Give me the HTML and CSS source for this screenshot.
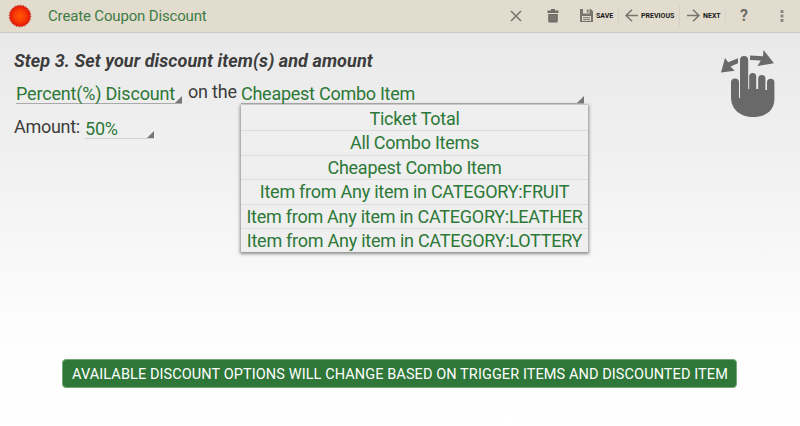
FILE: index.html
```html
<!DOCTYPE html>
<html lang="en">
<head>
<meta charset="utf-8">
<title>Create Coupon Discount</title>
<link rel="stylesheet" href="styles.css">
</head>
<body>
<header class="bar">
  <svg class="logo" viewBox="0 0 24 24">
    <defs><radialGradient id="seal"><stop offset="0" stop-color="#ff5a08"/><stop offset=".55" stop-color="#f93a06"/><stop offset="1" stop-color="#df1708"/></radialGradient></defs>
    <circle cx="12" cy="12" r="10.500" fill="url(#seal)"/>
    <circle cx="12" cy="12" r="10.800" fill="none" stroke="#c91d12" stroke-width="1" stroke-dasharray="1.4 1.4"/>
  </svg>
  <h1 class="title"><span>Create Coupon Discount</span></h1>
  <nav class="actions">
    <button class="action close" aria-label="Close"><svg width="12" height="12" viewBox="0 0 12 12"><path d="M1 1l10 10M11 1L1 11" fill="none" stroke="#77746c" stroke-width="1.5"/></svg></button>
    <button class="action trash" aria-label="Delete"><svg width="12" height="14" viewBox="0 0 12 14"><path d="M4 0h4v1.4h3.5V4H.5V1.4H4zM1.2 5h9.6v7q0 1.5-1.5 1.5H2.7Q1.2 13.500 1.200 12z" fill="#706d66"/><path d="M3.900 6.500v5M6 6.500v5M8.100 6.500v5" stroke="#918e86" stroke-width=".7"/></svg></button>
    <button class="action save"><svg width="13" height="13" viewBox="0 0 13 13"><path d="M0 0h10.800L13 2.200V13H0z" fill="#77746c"/><path d="M3 0h6.500v4.500H3zM2 7h9v5H2z" fill="#e2dccf"/><path d="M6.800 .5h1.700v3H6.800z" fill="#77746c"/><path d="M3 8.700h7M3 10.700h7" stroke="#77746c"/></svg><span>SAVE</span></button>
    <button class="action previous"><svg width="13" height="13" viewBox="0 0 13 13"><path d="M7 .8L1 6.500l6 5.700M1 6.500h12" fill="none" stroke="#77746c" stroke-width="1.500"/></svg><span>PREVIOUS</span></button>
    <button class="action next"><svg width="13" height="13" viewBox="0 0 13 13"><path d="M6 .8l6 5.700-6 5.700M12 6.500H0" fill="none" stroke="#77746c" stroke-width="1.500"/></svg><span>NEXT</span></button>
    <button class="action help" aria-label="Help">?</button>
    <button class="action more" aria-label="More"><svg width="4" height="12" viewBox="0 0 4 12"><path d="M.5 0h3v3h-3zM.5 4.500h3v3h-3zM.5 9h3v3h-3z" fill="#8d8a82"/></svg></button>
  </nav>
</header>
<main class="content">
  <div class="form">
    <h2 class="step"><span>Step 3. Set your discount item(s) and amount</span></h2>
    <div class="row">
      <div class="spinner kind"><span>Percent(%) Discount</span></div>
      <span class="joiner">on the</span>
      <div class="spinner target"><span>Cheapest Combo Item</span>
        <ul class="menu">
          <li>Ticket Total</li>
          <li>All Combo Items</li>
          <li>Cheapest Combo Item</li>
          <li>Item from Any item in CATEGORY:FRUIT</li>
          <li>Item from Any item in CATEGORY:LEATHER</li>
          <li>Item from Any item in CATEGORY:LOTTERY</li>
        </ul>
      </div>
    </div>
    <div class="row amount-row">
      <span class="label">Amount:</span>
      <div class="spinner amount"><span>50%</span></div>
    </div>
  </div>
  <svg class="gesture" width="56" height="68" viewBox="0 0 56 68">
    <g fill="#696969">
      <path d="M10 32.500a4 4 0 0 1 8 0V48h1V10.200a4.100 4.100 0 0 1 8.200 0V39h1V26.500a3.500 3.500 0 0 1 7 0V39h2V28.500a3.600 3.600 0 0 1 7.200 0V40h1.600V32.500a3.700 3.700 0 0 1 7.400 0V49C53.400 61 44 67 32 67S10 60 10 47z"/>
      <path d="M0 22.500L4 8l3.200 4.200 9.800-4v5L9.500 16.500l4.200 4.300zM29 5.500l13 .8L42.500 0 53 13.200 36.500 16l3.300-5.400L29 10z"/>
    </g>
  </svg>
</main>
<footer class="notice"><p><span>AVAILABLE DISCOUNT OPTIONS WILL CHANGE BASED ON TRIGGER ITEMS AND DISCOUNTED ITEM</span></p></footer>
</body>
</html>
```
FILE: styles.css
```css
* { box-sizing: border-box; }
body {
  margin: 0; width: 800px; height: 426px; overflow: hidden;
  display: flex; flex-direction: column;
  font-family: Roboto, sans-serif; color: #3c3c3c;
  background: linear-gradient(#e9e9e9 32px, #f0f0f0 150px, #fdfdfd 330px, #fff);
}
h1, h2, p, ul { margin: 0; padding: 0; font-weight: 400; }
span, li { white-space: nowrap; }
.bar {
  height: 33px; flex: none; display: flex; align-items: center;
  padding: 0 0 1px 8px; background: #e2dccf; border-bottom: 1px solid #cbc9c4;
}
.logo { width: 24px; height: 24px; flex: none; }
.title { width: 478px; padding-left: 16px; font-size: 15px; letter-spacing: -.16px; color: #3f7b45; }
.actions { display: flex; align-items: center; height: 24px; }
.action {
  display: flex; align-items: center; height: 20px; padding: 0; border: 0;
  background: none; color: #171717; font: 700 7px/20px Roboto, sans-serif;
}
.close { width: 37px; }
.trash { width: 33px; }
.save { width: 39px; gap: 3px; border-right: 1px solid #d5d0c5; }
.previous { width: 61px; padding-left: 6px; gap: 3px; border-right: 1px solid #d5d0c5; }
.next { width: 46px; padding-left: 7px; gap: 3px; border-right: 1px solid #d9d4c9; }
.help { width: 54px; padding-left: 14px; font-size: 16px; color: #706d66; }
.content { display: flex; justify-content: space-between; height: 326px; padding: 17px 23px 0 14px; }
.form { width: 590px; }
.step { height: 22px; font-size: 18px; line-height: 21px; letter-spacing: .07px; font-weight: 700; font-style: italic; }
.row { display: flex; height: 32px; font-size: 18px; line-height: 22px; letter-spacing: -.19px; }
.spinner { position: relative; height: 21px; color: #2c7837; border-bottom: 1px solid #a9a9a9; }
.spinner::after {
  content: ""; position: absolute; right: 0; bottom: 0;
  border-left: 7px solid transparent; border-bottom: 7px solid #777;
}
.kind { margin: 11px 6px 0 2px; width: 166px; }
.joiner { width: 53px; margin-top: 9px; }
.target { width: 343px; margin-top: 11px; letter-spacing: -.26px; }
.amount-row { margin-top: 3px; }
.label { width: 71px; margin-top: 9px; letter-spacing: -.28px; }
.amount { margin-top: 11px; width: 69px; border-color: #d0d0d0; }
.menu {
  position: absolute; left: 0; top: 22px; width: 347px; padding-top: 2px; list-style: none;
  background: #efefef; box-shadow: 0 1px 3px 1px #8c8c8c;
}
.menu li { height: 24.400px; line-height: 24px; text-align: center; border-bottom: 1px solid #dcdcdc; }
.menu li:last-child { height: 23.500px; border: 0; }
.gesture { flex: none; }
.notice { display: flex; padding-left: 62px; }
.notice p {
  width: 675px; height: 29px; padding-left: 9px; border: 1px solid #73a877; border-radius: 4px;
  background: #2e7739; color: #fff; font-size: 14.500px; line-height: 29px; letter-spacing: .09px;
}
```
